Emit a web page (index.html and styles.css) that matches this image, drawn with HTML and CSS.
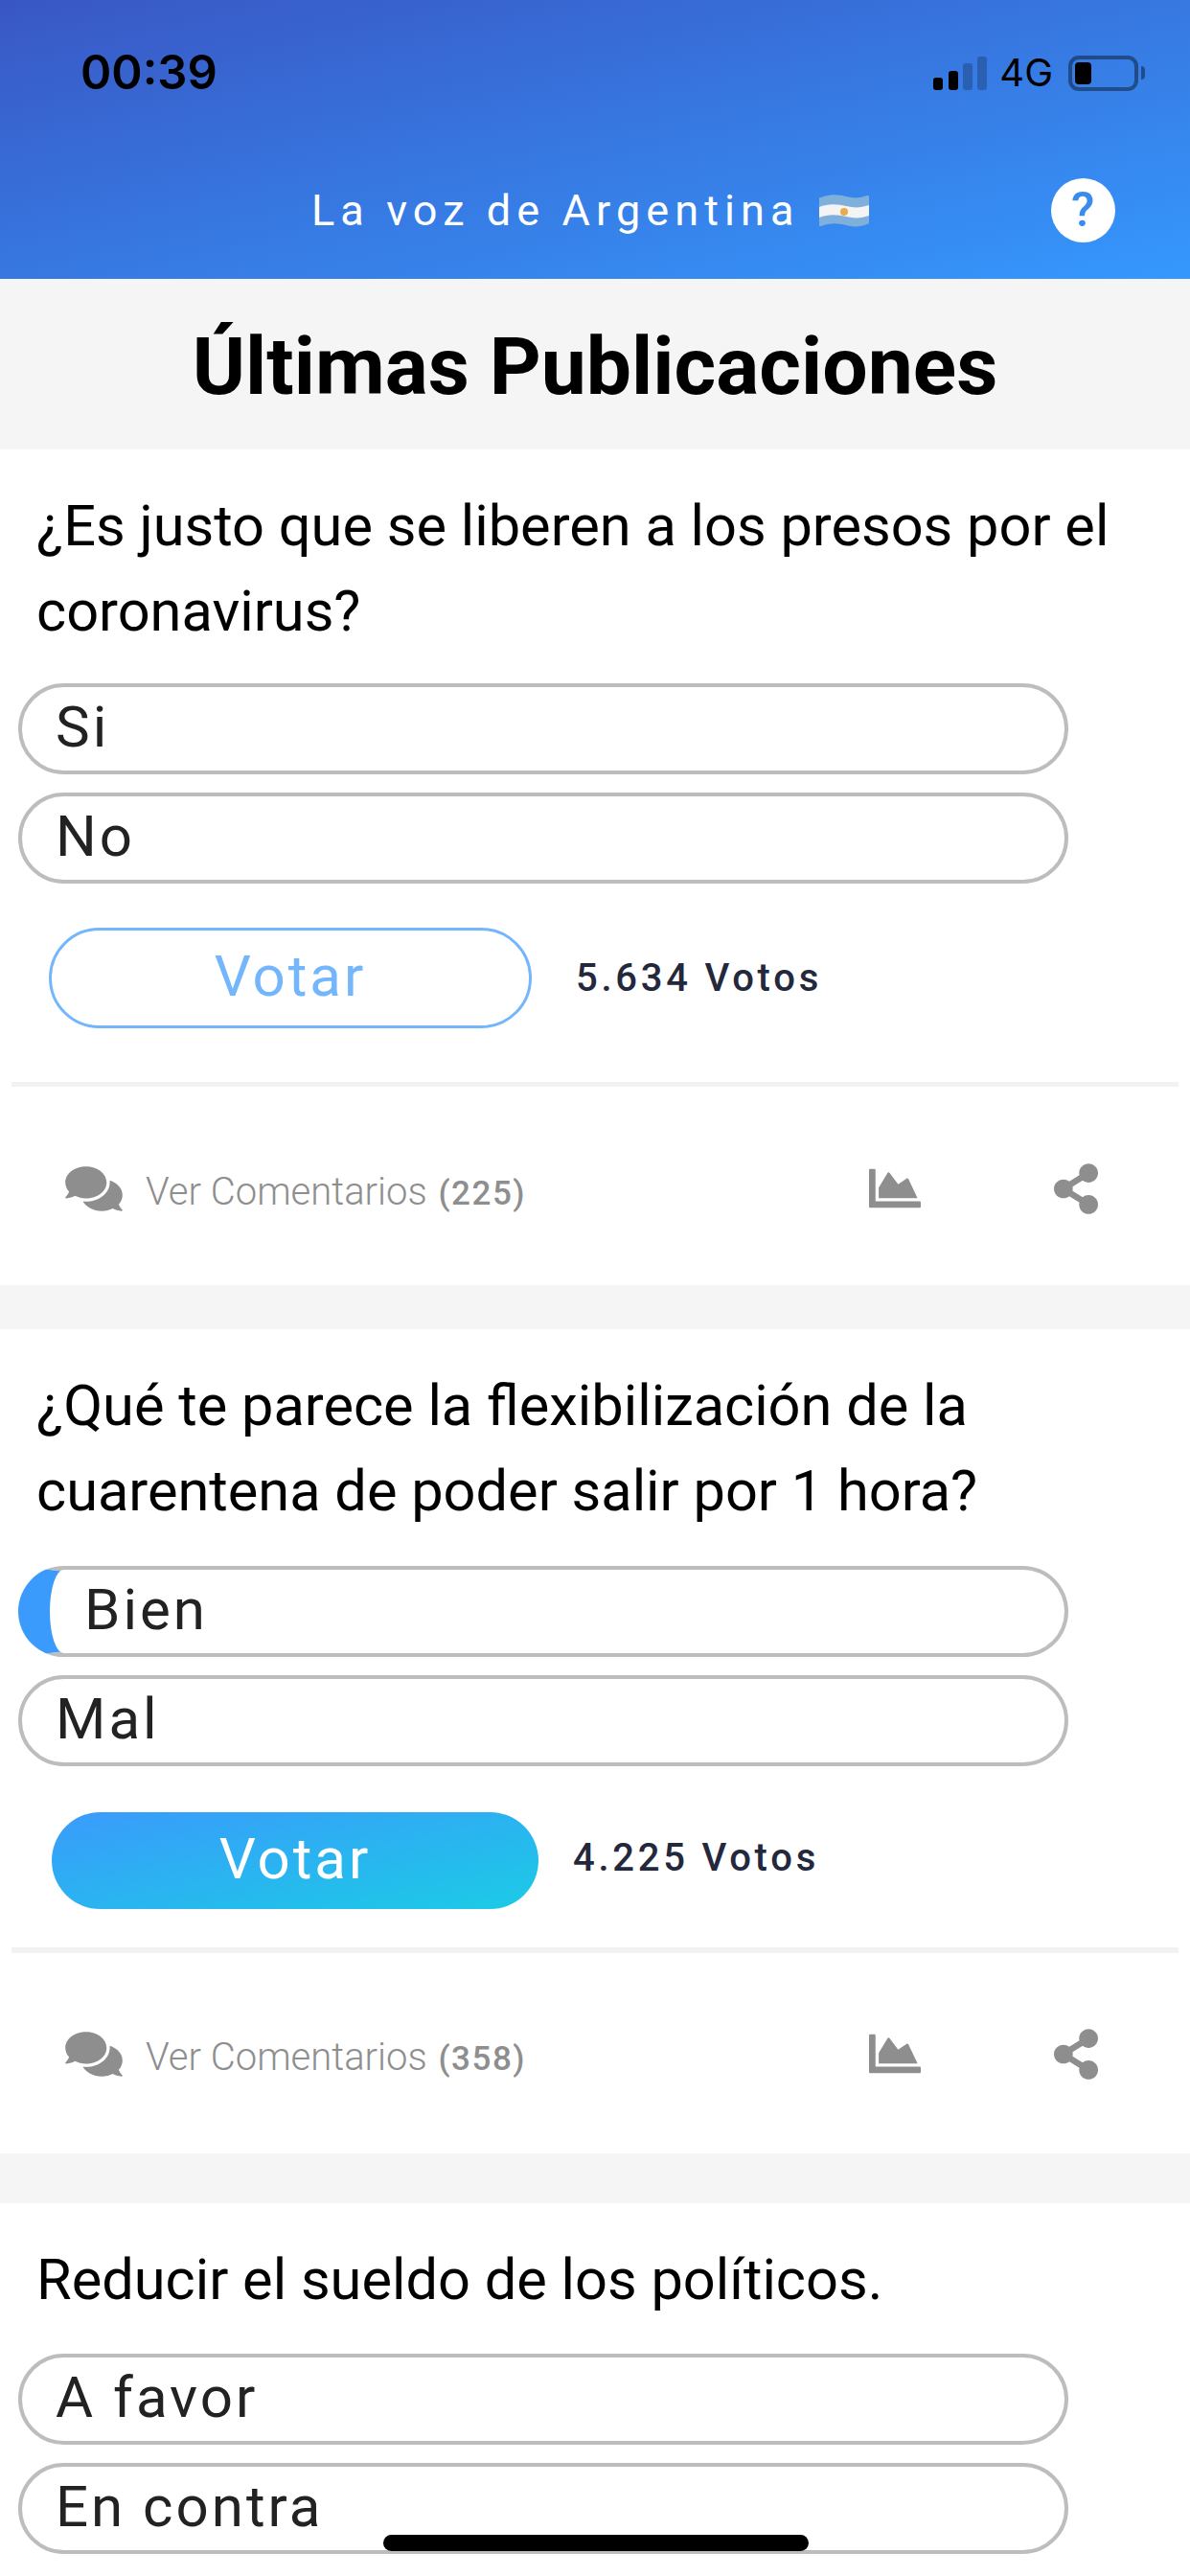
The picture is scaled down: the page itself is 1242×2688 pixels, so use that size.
FILE: index.html
```html
<!DOCTYPE html>
<html lang="es">
<head>
<meta charset="utf-8">
<title>La voz de Argentina</title>
<link rel="stylesheet" href="styles.css">
</head>
<body>
<div class="page">
  <header class="header">
    <div class="status">
      <span class="time">00:39</span>
      <div class="signal"><i class="on b1"></i><i class="on b2"></i><i class="b3"></i><i class="b4"></i></div>
      <span class="net">4G</span>
      <div class="battery"><div class="level"></div></div>
      <div class="tip"></div>
    </div>
    <div class="bar">
      <span class="brand">La voz de Argentina</span>
      <svg class="flag" viewBox="0 0 52 36" aria-hidden="true">
        <path d="M2 4C12 0 20 1 28 3s14 2 22-1c1 0 2 0 2 1v27c0 1-1 2-2 2-8 3-14 3-22 1S12 30 2 34c-1 0-2 0-2-1V5c0-1 1-1 2-1z" fill="#7fb0dc"/>
        <path d="M0 14c10-4 19-3 28-1s15 2 24-1v11c-9 3-15 3-24 1S10 21 0 25z" fill="#f4f4f4"/>
        <circle cx="26" cy="19" r="4" fill="#e8ac4c"/>
      </svg>
      <span class="help">?</span>
    </div>
  </header>
  <h1 class="title">Últimas Publicaciones</h1>

  <section class="card first">
    <p class="question">¿Es justo que se liberen a los presos por el coronavirus?</p>
    <div class="options">
      <div class="option">Si</div>
      <div class="option">No</div>
    </div>
    <div class="vote">
      <button class="btn">Votar</button>
      <span class="count">5.634 Votos</span>
    </div>
    <hr class="rule">
    <div class="foot">
      <svg class="ic-comments" viewBox="0 0 576 512"><path d="M416 192c0-88.400-93.100-160-208-160S0 103.600 0 192c0 34.300 14.100 65.900 38 92-13.400 30.200-35.500 54.200-35.800 54.500-2.200 2.300-2.800 5.700-1.500 8.700S4.800 352 8 352c36.600 0 66.900-12.300 88.700-25 32.200 15.700 70.300 25 111.300 25 114.900 0 208-71.600 208-160zm122 220c23.900-26 38-57.700 38-92 0-66.900-53.500-124.200-129.300-148.100.9 6.600 1.300 13.300 1.300 20.100 0 105.900-107.700 192-240 192-10.800 0-21.300-.8-31.700-1.900C207.800 439.600 281.800 480 368 480c41 0 79.100-9.200 111.300-25 21.800 12.700 52.100 25 88.700 25 3.200 0 6.100-1.900 7.300-4.800 1.300-2.900.7-6.300-1.500-8.700-.3-.3-22.400-24.200-35.800-54.500z"/></svg>
      <span class="see">Ver Comentarios <b>(225)</b></span>
      <svg class="ic-chart" viewBox="0 0 512 512"><path d="M500 384c6.600 0 12 5.400 12 12v40c0 6.600-5.400 12-12 12H12c-6.600 0-12-5.400-12-12V76c0-6.600 5.400-12 12-12h40c6.600 0 12 5.400 12 12v308h436zM372.700 159.500L288 216l-85.300-113.700c-5.100-6.800-15.500-6.300-19.900 1L96 248v104h384l-89.900-187.800c-3.200-6.500-11.400-8.700-17.400-4.700z"/></svg>
      <svg class="ic-share" viewBox="0 0 448 512"><path d="M352 320c-22.608 0-43.387 7.819-59.790 20.895l-102.486-64.054a96.551 96.551 0 0 0 0-41.683l102.486-64.054C308.613 184.181 329.392 192 352 192c53.019 0 96-42.981 96-96S405.019 0 352 0s-96 42.981-96 96c0 7.158.79 14.130 2.276 20.841L155.790 180.895C139.387 167.819 118.608 160 96 160c-53.019 0-96 42.981-96 96s42.981 96 96 96c22.608 0 43.387-7.819 59.790-20.895l102.486 64.054A96.301 96.301 0 0 0 256 416c0 53.019 42.981 96 96 96s96-42.981 96-96-42.981-96-96-96z"/></svg>
    </div>
  </section>

  <section class="card second">
    <p class="question">¿Qué te parece la flexibilización de la cuarentena de poder salir por 1 hora?</p>
    <div class="options">
      <div class="option selected">Bien</div>
      <div class="option">Mal</div>
    </div>
    <div class="vote active">
      <button class="btn">Votar</button>
      <span class="count">4.225 Votos</span>
    </div>
    <hr class="rule">
    <div class="foot">
      <svg class="ic-comments" viewBox="0 0 576 512"><path d="M416 192c0-88.400-93.100-160-208-160S0 103.600 0 192c0 34.300 14.100 65.900 38 92-13.400 30.200-35.500 54.200-35.800 54.500-2.200 2.300-2.800 5.700-1.500 8.700S4.800 352 8 352c36.600 0 66.900-12.300 88.700-25 32.200 15.700 70.300 25 111.300 25 114.900 0 208-71.600 208-160zm122 220c23.900-26 38-57.700 38-92 0-66.900-53.500-124.200-129.300-148.100.9 6.600 1.300 13.300 1.300 20.100 0 105.900-107.700 192-240 192-10.800 0-21.300-.8-31.700-1.900C207.800 439.600 281.800 480 368 480c41 0 79.100-9.200 111.300-25 21.800 12.700 52.100 25 88.700 25 3.200 0 6.100-1.900 7.300-4.800 1.300-2.900.7-6.300-1.500-8.700-.3-.3-22.400-24.200-35.800-54.500z"/></svg>
      <span class="see">Ver Comentarios <b>(358)</b></span>
      <svg class="ic-chart" viewBox="0 0 512 512"><path d="M500 384c6.600 0 12 5.400 12 12v40c0 6.600-5.400 12-12 12H12c-6.600 0-12-5.400-12-12V76c0-6.600 5.400-12 12-12h40c6.600 0 12 5.400 12 12v308h436zM372.700 159.500L288 216l-85.300-113.700c-5.100-6.800-15.500-6.300-19.900 1L96 248v104h384l-89.900-187.800c-3.200-6.500-11.400-8.700-17.400-4.700z"/></svg>
      <svg class="ic-share" viewBox="0 0 448 512"><path d="M352 320c-22.608 0-43.387 7.819-59.790 20.895l-102.486-64.054a96.551 96.551 0 0 0 0-41.683l102.486-64.054C308.613 184.181 329.392 192 352 192c53.019 0 96-42.981 96-96S405.019 0 352 0s-96 42.981-96 96c0 7.158.79 14.130 2.276 20.841L155.790 180.895C139.387 167.819 118.608 160 96 160c-53.019 0-96 42.981-96 96s42.981 96 96 96c22.608 0 43.387-7.819 59.790-20.895l102.486 64.054A96.301 96.301 0 0 0 256 416c0 53.019 42.981 96 96 96s96-42.981 96-96-42.981-96-96-96z"/></svg>
    </div>
  </section>

  <section class="card third">
    <p class="question">Reducir el sueldo de los políticos.</p>
    <div class="options">
      <div class="option">A favor</div>
      <div class="option">En contra</div>
    </div>
  </section>

  <div class="home"></div>
</div>
</body>
</html>
```
FILE: styles.css
```css
* { box-sizing: border-box; }
html, body { margin: 0; padding: 0; background: #fff; }
.page {
  position: relative;
  width: 1242px;
  height: 2688px;
  overflow: hidden;
  background: #f5f5f5;
  font-family: Roboto, "Liberation Sans", sans-serif;
}

.header {
  height: 291px;
  background: linear-gradient(to bottom right, #3957c4, #3598fd);
  color: #fff;
}
.status {
  display: flex;
  align-items: center;
  height: 62px;
  margin: 0;
  padding: 45px 47px 0 84px;
  box-sizing: content-box;
  color: #000;
}
.time {
  font-family: Inter, "Liberation Sans", sans-serif;
  font-size: 49px;
  font-weight: 600;
  line-height: 60px;
  margin-right: auto;
}
.signal {
  display: flex;
  align-items: flex-end;
  gap: 5.3px;
  height: 35px;
  margin-right: 13px;
}
.signal i {
  display: block;
  width: 10px;
  border-radius: 3px;
  background: rgba(0, 0, 0, .22);
}
.signal i.on { background: #000; }
.b1 { height: 13px; }
.b2 { height: 20px; }
.b3 { height: 28px; }
.b4 { height: 35px; }
.net {
  font-family: Inter, "Liberation Sans", sans-serif;
  font-size: 40px;
  line-height: 40px;
  margin-right: 16px;
}
.battery {
  width: 73px;
  height: 37px;
  padding: 3px;
  border: 4px solid rgba(0, 0, 0, .4);
  border-radius: 11px;
}
.level {
  width: 17px;
  height: 100%;
  border-radius: 4px;
  background: #000;
}
.tip {
  width: 4px;
  height: 14px;
  margin-left: 3px;
  border-radius: 0 7px 7px 0;
  background: rgba(0, 0, 0, .4);
}
.bar {
  display: flex;
  align-items: center;
  height: 67px;
  margin-top: 79px;
  padding-left: 325px;
}
.brand {
  font-size: 45px;
  font-weight: 400;
  letter-spacing: 6.1px;
  line-height: 67px;
}
.flag { width: 52px; height: 36px; margin-left: 20px; }
.help {
  width: 67px;
  height: 67px;
  margin-left: 190px;
  border-radius: 50%;
  background: #fff;
  color: #3a8cec;
  font-size: 50px;
  font-weight: 500;
  line-height: 67px;
  text-align: center;
}

.title {
  height: 178px;
  margin: 0;
  padding-top: 5px;
  font-size: 84px;
  font-weight: 700;
  line-height: 173px;
  text-align: center;
  color: #000;
}

.card { background: #fff; padding: 36px 12px 0; }
.first { height: 872px; margin-bottom: 46px; }
.second { height: 860px; margin-bottom: 52px; }
.third { height: 400px; }

.question {
  margin: 0 0 30px;
  padding-left: 26px;
  font-size: 59.5px;
  line-height: 89px;
  color: #000;
}
.second .question { margin-bottom: 33px; }
.third .question { margin-bottom: 32px; }

.options { display: flex; flex-direction: column; gap: 19px; padding-left: 7px; }
.option {
  width: 1096px;
  height: 95px;
  padding-left: 35px;
  border: 4px solid #bdbdbd;
  border-radius: 48px;
  font-size: 60px;
  line-height: 84px;
  letter-spacing: 3px;
  color: #222;
}
.option.selected { border-left: 33px solid #3a9bfc; padding-left: 36px; }

.vote {
  display: flex;
  align-items: center;
  height: 105px;
  margin-top: 46px;
  padding-left: 39px;
}
.btn {
  width: 504px;
  height: 105px;
  padding: 0 0 3px;
  border: 3px solid #74b6fc;
  border-radius: 53px;
  background: #fff;
  color: #74b6fc;
  font-family: inherit;
  font-size: 60px;
  line-height: 1;
  letter-spacing: 3px;
}
.count {
  margin-left: 46px;
  font-size: 40px;
  font-weight: 500;
  letter-spacing: 3.75px;
  color: #24283c;
}
.vote.active { height: 101px; margin-top: 48px; padding-left: 42px; }
.vote.active .btn {
  width: 508px;
  height: 101px;
  border: 0;
  border-radius: 51px;
  background: linear-gradient(to bottom right, #3a9bfc, #1bcbe5);
  color: #fff;
}
.vote.active .count { margin-left: 36px; margin-bottom: 6px; }

.rule { height: 5px; margin: 56px 0 0; border: 0; background: #f2f2f2; }
.vote.active + .rule { height: 6px; margin-top: 40px; }

.foot {
  display: flex;
  align-items: center;
  height: 106px;
  margin-top: 53px;
  padding-left: 56px;
  fill: #8e8e8e;
}
.vote.active + .rule + .foot { margin-top: 52px; }
.ic-comments { width: 60px; height: 53px; margin-right: 24px; flex: none; }
.see {
  margin-top: 6px;
  font-size: 40px;
  font-weight: 300;
  color: #8e8e8e;
}
.see b { margin-left: 2px; font-size: 35px; font-weight: 500; letter-spacing: 1.5px; }
.ic-chart { width: 54px; height: 54px; margin-left: auto; flex: none; }
.ic-share { width: 46px; height: 53px; margin-left: 139px; margin-right: 84px; flex: none; }

.home {
  position: absolute;
  left: 400px;
  top: 2645px;
  width: 444px;
  height: 17px;
  border-radius: 9px;
  background: #000;
}
```
